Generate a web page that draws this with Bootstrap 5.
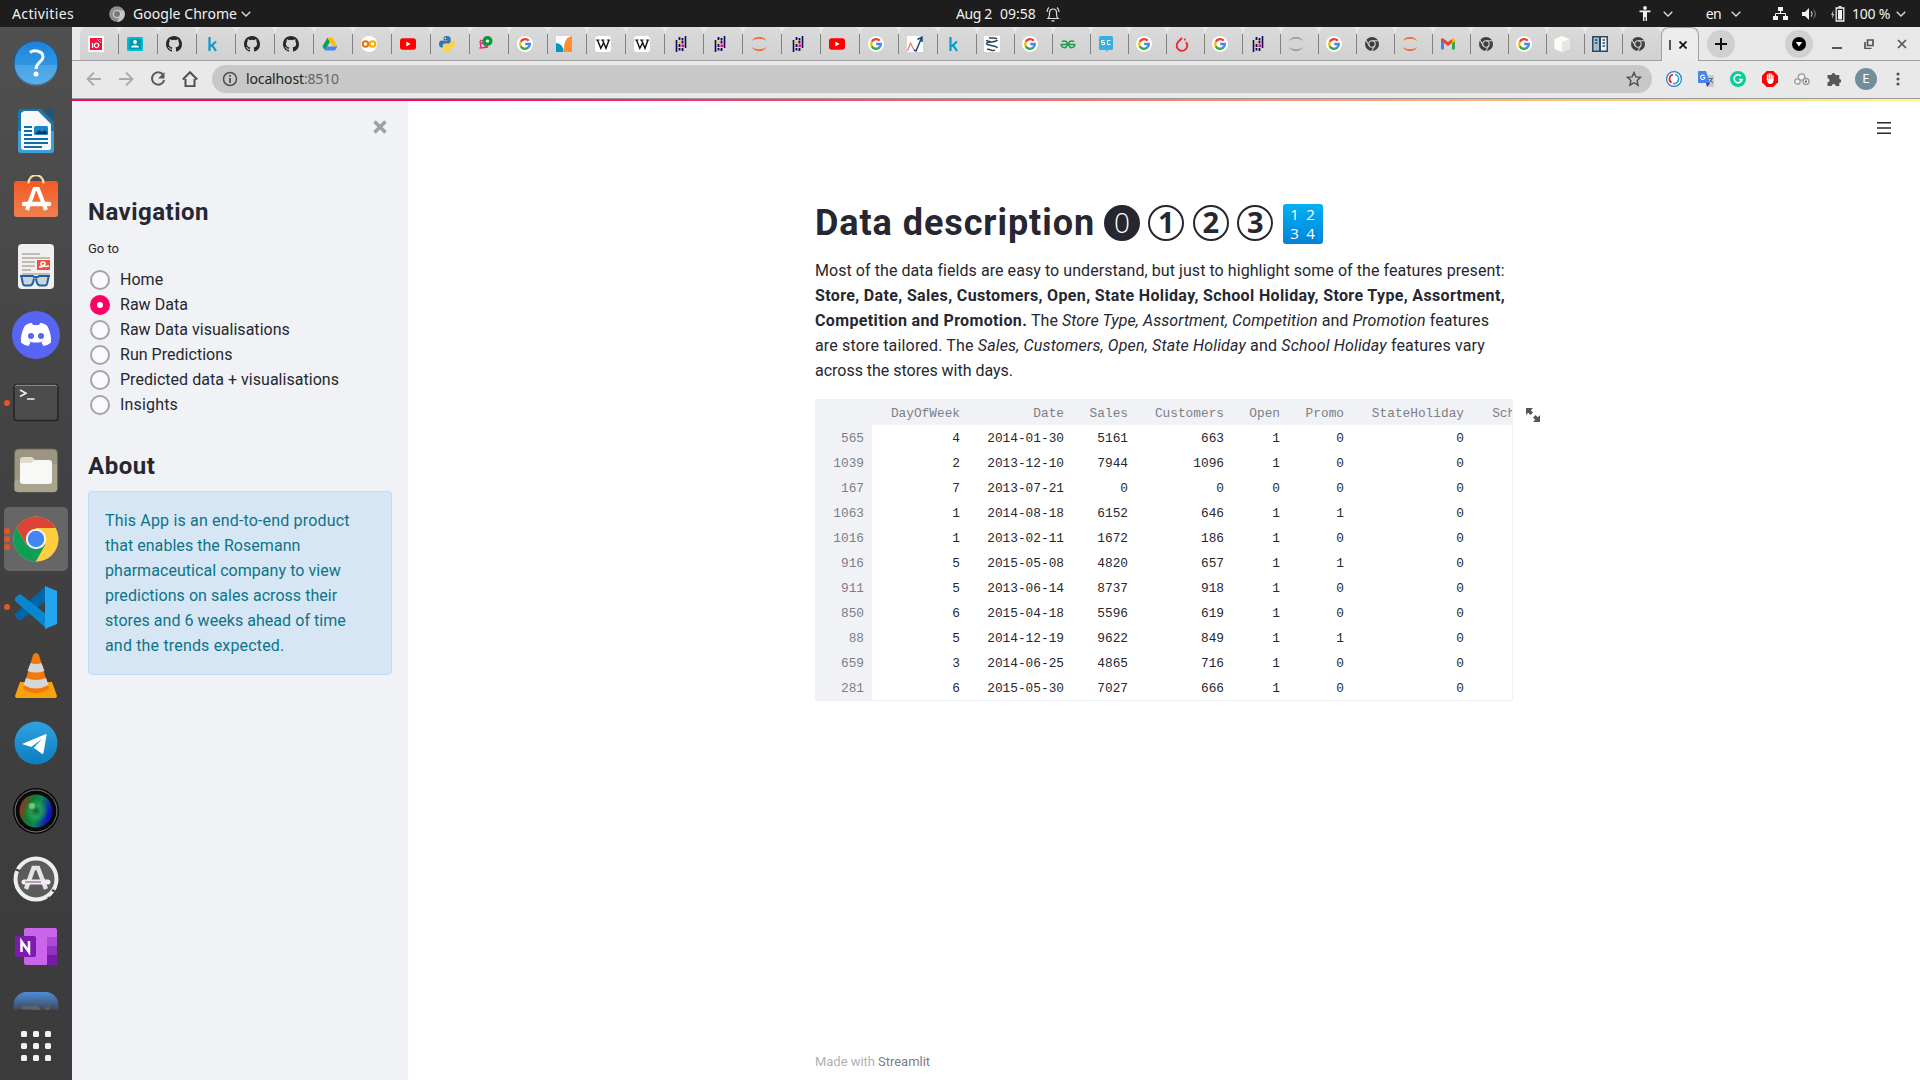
<!DOCTYPE html>
<html lang="en">
<head>
<meta charset="utf-8">
<title>Data description</title>
<link href="https://cdn.jsdelivr.net/npm/bootstrap@5.3.0/dist/css/bootstrap.min.css" rel="stylesheet">
<style>
html,body{height:1080px;overflow:hidden}
body{width:1920px;font-family:Roboto,"Noto Sans",sans-serif;font-size:16px;color:#262730;line-height:25px}
svg{display:block;flex:none}
.ubu{font-family:"Noto Sans","Open Sans",sans-serif}
.f{white-space:nowrap}
/* top bar */
.topbar{height:27px;background:#1d1d1d;color:#f2f2f2;font-size:14px;line-height:27px}
.tb-left{width:956px;padding-left:12px}
.app-name{margin-left:35px}
.t-act{letter-spacing:.367px}
.t-app{letter-spacing:.049px}
.t-day{letter-spacing:-.372px}
.t-lang{letter-spacing:-.7px;margin-left:33px}
.t-pct{letter-spacing:-.263px;margin-left:7px}
.bell{margin-left:10px}
.tray{padding-right:14px}
.tray .cv-a{margin-left:12px}
.tray .cv-b{margin-left:10px}
.tray .net{margin-left:32px}
.tray .vol{margin-left:14px}
.tray .bat{margin-left:13px}
.tray .cv-c{margin-left:6px}
/* dock */
.dock{width:72px;background:linear-gradient(#505050,#414141 45%,#3b3b3b);padding-top:2px}
.dk{height:68px;width:72px}
.dk.on{position:relative}
.dk.on::before{content:"";position:absolute;left:4px;right:4px;top:2px;bottom:2px;background:#666;border-radius:5px}
.dk.on svg{position:relative}
.pips{position:absolute;left:4px;top:0;height:100%}
.pips i{width:6px;height:6px;border-radius:50%;background:#e95420;margin:1px 0}
.dk-cut{height:29px;overflow:hidden}
.dk-apps{height:72px}
/* tab strip */
.strip{height:33px;background:#e8e8e8;padding-left:8px}
.strip-wrap{border-bottom:1px solid #9f9f9f}
.tb{width:39px;height:33px;background:linear-gradient(#dadada,#d1d1d1);border-radius:7px 7px 0 0;padding:1px 0 0 8px;position:relative}
.tb::after{content:"";position:absolute;right:0;top:7px;height:20px;width:1px;background:#808080}
.tb.n{width:38px;padding-left:7px}
.tb.z::after{display:none}
.tab-now{width:38px;height:34px;background:#ececec;border:1px solid #9f9f9f;border-bottom:0;border-radius:8px 8px 0 0;padding-left:7px;gap:8px;position:relative}
.tab-now i{width:2px;height:10px;background:#555}
.rnd{width:28px;height:28px;background:#d0d0d0}
.win{padding-left:8px}
.win .srch{margin-left:50px}
.win .mini{margin-left:19px}
.win .rest{margin-left:22px}
.win .clos{margin-left:23px}
/* toolbar */
.tools{height:38px;background:#e9e9e9;border-bottom:1px solid #9b9b9b;padding:3px 12px 4px 14px}
.omni{width:1440px;height:28px;border-radius:14px;background:#c8c8c8;padding:0 10px;margin-left:14px;font-size:14px}
.url{letter-spacing:-.14px;color:#222;padding-bottom:1px}
.url span{color:#666}
.exts{margin-left:14px}
.avatar{width:22px;height:22px;background:#6f909b;font-size:12px;line-height:22px;margin-left:13px}
.kebab{margin-left:19px}
.pinkline{height:2px;background:linear-gradient(90deg,#f06 336px,#fffd80)}
/* sidebar */
.side{width:336px;background:#f0f2f6;padding:0 16px}
.side-x{padding:19px 5px 0 0;height:96px}
.side h2{font-size:24px;font-weight:700;line-height:30px;margin:0;letter-spacing:.486px}
.side h2.about{margin-top:34px;letter-spacing:.553px}
.goto{font-size:13px;line-height:20px;margin:12px 0 8px}
.rad{width:20px;height:20px;border:2px solid #a3a4aa;background:#fafafc;border-radius:50%;margin-left:2px}
.rad.sel{border:7px solid #f06;background:#fff}
.opt{height:25px;gap:10px;letter-spacing:.03px}
.opt.last{letter-spacing:.172px}
.note{background:#d7e6f4;border:1px solid #bedcf4;border-radius:4px;padding:16px;color:#0c7489;height:184px;margin-top:10px;letter-spacing:.05px}
.note .wide{letter-spacing:.17px}
/* content */
.body-col{width:698px;margin-left:407px}
h1{font-size:36px;font-weight:700;line-height:44px;margin:0;height:44px}
h1.title{margin-top:100px;letter-spacing:.926px}
.dig{width:36px;height:36px;border:2.5px solid #262730;border-radius:50%;font:700 29px/30px "Open Sans","Noto Sans",sans-serif;letter-spacing:0;text-align:center;margin:-1px 8.4px 0 0}
.dig.inv{background:#262730;color:#fff;font-weight:300;font-size:28px;margin-left:9px}
.num{width:40px;height:40px;border-radius:3px;background:linear-gradient(#03b0f3,#0284d6);color:#fff;font:400 15px/19px "Open Sans",sans-serif;letter-spacing:0;text-align:center;padding:1px 4px 1px;margin:2px 0 0 1px}
.intro{margin-top:13px;letter-spacing:.063px}
.intro b{letter-spacing:.355px}
.intro .l3{letter-spacing:.08px}
.intro .l4{letter-spacing:.161px}
.intro .l5{letter-spacing:-.017px}
.frame{width:698px;height:302px;overflow:hidden;border:1px solid #eff0f4;margin-top:16px}
.dt{width:785px;table-layout:fixed;border-collapse:collapse;font:12.8px/23px "Liberation Mono",monospace;text-align:right;color:#262730;margin:-1px 0 0 -1px}
.dt td,.dt th{padding:2px 8px 0 0;height:25px;font-weight:400}
.dt thead th{height:26px;background:#f0f2f6;color:#7d7e86}
.dt tbody th{background:#f0f2f6;color:#7d7e86}
.grow-ico{margin:306px 0 0 12px}
.menu-ico{margin:20px 29px 0 0}
.made{font-size:13px;line-height:20px;color:#b0b1b6;margin-bottom:10px;letter-spacing:-.035px}
.made span{color:#7c7d84}
</style>
<script src="https://cdn.jsdelivr.net/npm/bootstrap@5.3.0/dist/js/bootstrap.bundle.min.js"></script>
</head>
<body class="d-flex flex-column bg-white">
<svg width="0" height="0" class="position-absolute">
<defs>
<linearGradient id="blu" x2="0" y2="1"><stop stop-color="#1a82da"/><stop offset="1" stop-color="#44a6e8"/></linearGradient>
<linearGradient id="org" x2="0" y2="1"><stop stop-color="#f25a24"/><stop offset="1" stop-color="#f08050"/></linearGradient>
<linearGradient id="tgm" x2="0" y2="1"><stop stop-color="#2fa3e0"/><stop offset="1" stop-color="#0d7dbd"/></linearGradient>
<linearGradient id="zm" x2="0" y2="1"><stop stop-color="#4f8cdb"/><stop offset=".42" stop-color="#3c4656"/></linearGradient>
<linearGradient id="lens" y2=".3"><stop stop-color="#d01818"/><stop offset=".4" stop-color="#107a30"/><stop offset=".65" stop-color="#0c8a50"/><stop offset="1" stop-color="#1010c0"/></linearGradient>
<radialGradient id="lens2"><stop stop-color="#0c6030"/><stop offset=".5" stop-color="#30b060" stop-opacity=".6"/><stop offset="1" stop-color="#30b060" stop-opacity="0"/></radialGradient>
</defs>
<symbol id="io" viewBox="0 0 16 16"><path fill="#fff" d="M0 0h16v16H0z"/><path fill="#f8103e" d="M2 2h12v12H2z"/><path d="M4.500 7v5M8.500 7.200a2.200 2.200 0 1 0 .1 0" stroke="#fff" stroke-width="1.300" fill="none"/><path d="M9 3l4 4M11.500 3 13 4.500" stroke="#fff" stroke-width=".6"/></symbol>
<symbol id="cls" viewBox="0 0 16 16"><rect y="1" width="16" height="14" rx="1.500" fill="#00bcd4"/><rect x="2" y="3" width="12" height="10" fill="#0097a7"/><circle cx="8" cy="6" r="1.900" fill="#fff"/><path d="M4 11.500c0-3 8-3 8 0z" fill="#fff"/></symbol>
<symbol id="gh" viewBox="0 0 16 16"><path fill="#24292f" d="M8 0C3.580 0 0 3.580 0 8c0 3.540 2.290 6.530 5.470 7.590.4.070.55-.17.55-.38 0-.19-.01-.82-.01-1.490-2.010.37-2.530-.49-2.690-.94-.09-.23-.48-.94-.82-1.130-.28-.15-.68-.52-.01-.53.63-.01 1.080.58 1.230.82.72 1.210 1.870.87 2.330.66.07-.52.28-.87.51-1.070-1.780-.2-3.640-.89-3.640-3.950 0-.87.31-1.590.82-2.150-.08-.2-.36-1.020.08-2.120 0 0 .67-.21 2.200.82a7.600 7.600 0 0 1 4 0c1.530-1.040 2.200-.82 2.200-.82.44 1.100.16 1.920.08 2.120.51.56.82 1.270.82 2.150 0 3.070-1.870 3.750-3.650 3.950.29.25.54.73.54 1.480 0 1.070-.01 1.930-.01 2.200 0 .21.15.46.55.38A8.010 8.010 0 0 0 16 8c0-4.420-3.580-8-8-8z"/></symbol>
<symbol id="kg" viewBox="0 0 16 16"><path d="M4.500 1v14M11 5.500 5.500 10.500M7 9l4 6" stroke="#0c9bc9" stroke-width="2.200" fill="none"/></symbol>
<symbol id="drv" viewBox="0 0 16 16"><path fill="#0f9d58" d="M5.500 1.500 8 5.800 3 14.500.5 10.500z"/><path fill="#ffc107" d="M5.500 1.500h5l5 9h-5z"/><path fill="#4285f4" d="M5.500 10.500h10L13 14.500H3z"/></symbol>
<symbol id="clb" viewBox="0 0 16 16"><circle cx="8" cy="8" r="8" fill="#fff"/><circle cx="4.500" cy="8" r="2.800" fill="none" stroke="#e8710a" stroke-width="2"/><circle cx="11.500" cy="8" r="2.800" fill="none" stroke="#f9ab00" stroke-width="2"/></symbol>
<symbol id="yt" viewBox="0 0 16 16"><rect y="2.200" width="16" height="11.600" rx="2.800" fill="#f00"/><path d="m6.300 5.500 4.300 2.500-4.300 2.500z" fill="#fff"/></symbol>
<symbol id="py" viewBox="0 0 16 16"><path fill="#3776ab" d="M8 0C5 0 4.600 1.200 4.600 2.300V4H8.300v.6H2.600C1 4.600 0 6 0 8s1 3.500 2.300 3.500h1.500V9.700c0-1.400 1-2.300 2.200-2.300h3.800c1 0 1.800-.8 1.800-1.900V2.300C11.600 1 10.400 0 8 0z"/><path fill="#ffd43b" d="M8.200 16c3 0 3.400-1.200 3.400-2.300V12H7.900v-.6h5.700C15 11.400 16 10 16 8s-1-3.500-2.300-3.500h-1.300v1.800c0 1.400-1 2.300-2.200 2.300H6.400c-1 0-1.800.8-1.800 1.900v3.200C4.600 15 5.800 16 8.200 16z"/><circle cx="6.300" cy="2.200" r=".8" fill="#fff"/></symbol>
<symbol id="grp" viewBox="0 0 16 16"><path d="M2 4.500c3-1 4 2 6 5M2 5l1 7 7-1M3 7c4 0 2 3 7 4M1.500 12h4" stroke="#e8267c" stroke-width="1.300" fill="none"/><circle cx="9.500" cy="5" r="5" fill="#0a9a3a"/><circle cx="9.500" cy="5" r="1.600" fill="#fff"/></symbol>
<symbol id="gg" viewBox="0 0 16 16"><circle cx="8" cy="8" r="8" fill="#fff"/><g fill="none" stroke-width="2.400"><path stroke="#ea4335" d="M11.700 4.700A4.800 4.800 0 0 0 3.800 5.800"/><path stroke="#fbbc05" d="M3.800 5.700a4.800 4.800 0 0 0 0 4.600"/><path stroke="#34a853" d="M3.700 10.200a4.800 4.800 0 0 0 7.700 1.200"/><path stroke="#4285f4" d="M8.200 8h4.600a4.800 4.800 0 0 1-1.500 3.500"/></g></symbol>
<symbol id="mb" viewBox="0 0 16 16"><path fill="#fff" d="M0 0h16v16H0z"/><path fill="#0098cc" d="M0 7a8 8 0 0 1 7.500 9H0z"/><path fill="#ff8f33" d="M16 0v16H8C7.500 8 9 1 16 0z"/></symbol>
<symbol id="wk" viewBox="0 0 16 16"><rect width="16" height="16" rx="3" fill="#fff"/><path d="M.8 4h3.700M6 4h3.700M11.800 4h3.400" stroke="#111" stroke-width=".9"/><path d="m2.500 4 3.300 8.300L9 6M7.500 4l3.500 8.300L14 4" fill="none" stroke="#111" stroke-width="1.400"/></symbol>
<symbol id="pd" viewBox="0 0 16 16"><path d="M3.500 4v12M12.500 0v12" stroke="#150458" stroke-width="1.600"/><path d="M6.500 1v3M6.500 12v2.500M9.500 2v2.500M9.500 12v3M6.500 8v3M9.500 5v2.500" stroke="#150458" stroke-width="1.800"/><path d="M5.500 5H8v2.500H5.500z" fill="#ffca00"/><path d="M8.500 8.500H11V11H8.500z" fill="#e70488"/></symbol>
<symbol id="jp" viewBox="0 0 16 16"><path d="M.8 5C3-.5 13-.5 15.200 5 12 2 4 2 .8 5zM.8 11c2.200 5.500 12.200 5.500 14.400 0-3.200 3-11.200 3-14.400 0z" fill="#f7682c"/></symbol>
<symbol id="jg" viewBox="0 0 16 16"><path d="M.8 5C3-.5 13-.5 15.200 5 12 2 4 2 .8 5zM.8 11c2.200 5.500 12.200 5.500 14.400 0-3.200 3-11.200 3-14.400 0z" fill="#9e9e9e"/></symbol>
<symbol id="ch" viewBox="0 0 16 16"><path fill="#fff" d="M0 0h16v16H0z"/><path d="m.5 15 3-8L7 14" fill="none" stroke="#ee7a6a" stroke-width="1.300"/><path d="m7 14 2 1 5.500-13M10.500 3.500 15 1v5" fill="none" stroke="#124a78" stroke-width="1.500"/></symbol>
<symbol id="sp" viewBox="0 0 16 16"><path fill="#fff" d="M0 0h16v16H0z"/><path d="M5 1.500c3 1.500 6-.5 8 1.500M13.500 4C11 7 3 5 2.500 7.500S12 9 13.500 12M2.500 4c.5 1.500 3 1.500 4 1.500M3 13.500c3-1 5 2.500 8 .5" fill="none" stroke="#26496a" stroke-width="1.500"/></symbol>
<symbol id="gf" viewBox="0 0 16 16"><path d="M2 5.500c3-1.500 6 0 5 4-1 3.500-5.500 2.500-5.800-1h13.600c-.3 3.500-4.800 4.500-5.800 1-1-4 2-5.500 5-4" fill="none" stroke="#159c50" stroke-width="1.500"/></symbol>
<symbol id="so" viewBox="0 0 16 16"><path fill="#35b0e2" d="M2.500 0h11A1.500 1.500 0 0 1 15 1.500v11a1.500 1.500 0 0 1-1.500 1.500H10l-2 2v-2H2.500A1.500 1.500 0 0 1 1 12.500v-11A1.500 1.500 0 0 1 2.500 0z"/><path d="M6.500 4.500h-3V6.500h3v2h-3M12.500 4.500h-3v4h3" stroke="#fff" fill="none"/></symbol>
<symbol id="pt" viewBox="0 0 16 16"><path d="M8 2 4.200 5.800a5.300 5.300 0 1 0 7.700.2" fill="none" stroke="#ee2233" stroke-width="1.800"/><circle cx="10.800" cy="3.600" r="1" fill="#ee2233"/></symbol>
<symbol id="cr" viewBox="0 0 16 16"><circle cx="8" cy="8" r="7" fill="#3c4043"/><circle cx="8" cy="8" r="3.200" fill="#3c4043" stroke="#d4d4d4" stroke-width="1.100"/><path d="M8 4.700h6.200M5.200 9.700 2.100 4.300M10.800 9.700 7.700 15" stroke="#d4d4d4" stroke-width="1.100"/></symbol>
<symbol id="gm" viewBox="0 0 16 16"><path fill="#4285f4" d="M1 4h3v9.500H2a1 1 0 0 1-1-1z"/><path fill="#34a853" d="M12 4h3v8.500a1 1 0 0 1-1 1h-2z"/><path fill="#ea4335" d="M1 3.500c0-1.500 1.500-1.500 2.500-.8L8 6l4.500-3.300V6.500L8 10 3.500 6.500 1 5z"/><path fill="#fbbc04" d="M12 3c1.500-1.200 3-.5 3 1v1.300l-3 2z"/></symbol>
<symbol id="cb" viewBox="0 0 16 16"><path fill="#fbfbf9" d="m8 0 7.500 3v10L8 16 .5 13V3z"/><path fill="#e9e6e0" d="m8 6 7.500-3v10L8 16z"/></symbol>
<symbol id="dc" viewBox="0 0 16 16"><path fill="#33475b" d="M0 0h16v16H0z"/><path fill="#9fc0d0" d="M1.500 1.500H7v13H1.500z"/><path fill="#e8f4f8" d="M9 1.500h5.500v13H9z"/><path d="M3 4h2.500M3 7h2.500M10.500 4H13M10.500 7H13M10.500 10H13" stroke="#33475b" stroke-width="1.500"/></symbol>
<symbol id="cv" viewBox="0 0 10 6"><path d="m.7.7 4.300 4.300L9.300.7" fill="none" stroke="#ddd" stroke-width="1.300"/></symbol>
</svg>

<header class="topbar ubu d-flex align-items-center flex-shrink-0">
  <div class="tb-left d-flex align-items-center">
    <span class="f t-act">Activities</span>
    <svg class="app-name" width="16" height="16" viewBox="0 0 16 16"><circle cx="8" cy="8" r="7.800" fill="#8f8f8f"/><path d="M8 4.500h7A8 8 0 0 1 8 16l3-6z" fill="#c4c4c4"/><circle cx="8" cy="8" r="3.600" fill="#777" stroke="#ddd"/></svg>
    <span class="f t-app ms-2">Google Chrome</span>
    <svg class="ms-1" width="10" height="6"><use href="#cv"/></svg>
  </div>
  <span class="f t-day">Aug 2</span><span class="f ms-2">09:58</span>
  <svg class="bell" width="14" height="16" viewBox="0 0 14 16"><path d="M2 12.500c1.500-1 1.500-3 1.500-6a3.500 3.500 0 0 1 7 0c0 3 0 5 1.500 6zM5.500 14.800h3M1 6c0-2 .8-3.500 2-4.500M13 6c0-2-.8-3.500-2-4.500" fill="none" stroke="#ddd" stroke-width="1.200"/></svg>
  <div class="tray ms-auto d-flex align-items-center">
    <svg width="12" height="15" viewBox="0 0 12 15"><circle cx="6" cy="2" r="1.900" fill="#f2f2f2"/><path d="M.5 4.500h11v1.700H8V15H6.600v-4H5.400v4H4V6.200H.5z" fill="#f2f2f2"/></svg>
    <svg class="cv-a" width="10" height="6"><use href="#cv"/></svg>
    <span class="f t-lang">en</span>
    <svg class="cv-b" width="10" height="6"><use href="#cv"/></svg>
    <svg class="net" width="15" height="14" viewBox="0 0 15 14"><path d="M5 0h5v4H5zM0 9h5v4H0zM10 9h5v4h-5z" fill="#f2f2f2"/><path d="M7.500 4v2.500M2.500 9V6.500h10V9" stroke="#f2f2f2" fill="none"/></svg>
    <svg class="vol" width="15" height="12" viewBox="0 0 15 12"><path d="M0 4h3l4-4v12L3 8H0z" fill="#f2f2f2"/><path d="M9 3.500c1.300 1.300 1.300 3.700 0 5" fill="none" stroke="#ccc" stroke-width="1.200"/><path d="M11.500 1.500c2.300 2.500 2.300 6.500 0 9" fill="none" stroke="#888"/></svg>
    <svg class="bat" width="15" height="16" viewBox="0 0 15 16"><path d="M3.500 4 1 9h1.500L2 13l2.500-5H3z" fill="#bbb"/><path d="M8.500 0h3v1.500h-3z" fill="#f2f2f2"/><path d="M6.200 2h7.600v13H6.200z" fill="none" stroke="#f2f2f2" stroke-width="1.300"/><path d="M8 4h4v9.500H8z" fill="#f2f2f2"/></svg>
    <span class="f t-pct">100 %</span>
    <svg class="cv-c" width="10" height="6"><use href="#cv"/></svg>
  </div>
</header>

<div class="d-flex flex-grow-1">
<nav class="dock d-flex flex-column align-items-center flex-shrink-0">
  <div class="dk d-flex align-items-center justify-content-center"><svg width="48" height="48"><circle cx="24" cy="24" r="22" fill="url(#blu)" stroke="#165d9a"/><path d="M2.500 26a21.500 21.500 0 0 0 43 0z" fill="#fff" opacity=".12"/><path d="M18 13.500c4-3 13-2 13 4.500 0 5-7 5-7 12" fill="none" stroke="#fff" stroke-width="3"/><circle cx="24" cy="35" r="2.500" fill="#fff"/></svg></div>
  <div class="dk d-flex align-items-center justify-content-center"><svg width="48" height="48"><path d="M9 2h20l13 13v28a3 3 0 0 1-3 3H9a3 3 0 0 1-3-3V5a3 3 0 0 1 3-3z" fill="#1a75ab"/><path d="M6 24h36v19a3 3 0 0 1-3 3H9a3 3 0 0 1-3-3z" fill="#3da0d8"/><path d="M12 4h14l13 13v24a2 2 0 0 1-2 2H12a3 3 0 0 1-3-3V6z" fill="#f8f8f8"/><path d="M32 2h10v11z" fill="#11598a"/><path d="M12 20h8M12 24h8M12 28h8M12 32h24M12 36h24M12 40h18" stroke="#0d6eb0" stroke-width="2"/><rect x="22" y="19" width="14" height="9" rx="1.500" fill="#1a85c8"/><path d="m23 27 4-4 3 2 3-2 3 4z" fill="#0c3b5e"/></svg></div>
  <div class="dk d-flex align-items-center justify-content-center"><svg width="48" height="48"><rect x="2" y="6" width="44" height="36" rx="3" fill="url(#org)"/><path d="M16.500 8.500c0-11 15-11 15 0" fill="none" stroke="#f7dcae" stroke-width="2.200"/><path d="m15 35 7.500-21h3.500L34 35" fill="none" stroke="#fff" stroke-width="4"/><path d="M12 29h25" stroke="#fff" stroke-width="4.500" stroke-linecap="round"/></svg></div>
  <div class="dk d-flex align-items-center justify-content-center"><svg width="48" height="48"><rect x="6" y="1" width="36" height="45" rx="4" fill="#f0f0f0"/><path d="M10 11h18M10 15h28M10 19h13M10 23h13M10 27h9M10 31h28" stroke="#c0bcae" stroke-width="2"/><path d="M25 17h13v10H25z" fill="#f2503e"/><path d="M27 24c6 0 8-5 4-5s-3 6 6 4" fill="none" stroke="#fff" stroke-width="1.500"/><path d="M9 34h12l3 1 3-1h9l-2 8h-7l-2-5h-2l-2 5h-9z" fill="#cfd4d8"/><path d="M8 33h12.500l2 1h3l2-1H38M9.500 34l1.500 7q.5 1.500 2 1.500h5q3 0 4-7M36.500 34 35 41q-.5 1.500-2 1.500h-5q-3 0-4-7" fill="none" stroke="#1f5fa8" stroke-width="2"/></svg></div>
  <div class="dk d-flex align-items-center justify-content-center"><svg width="48" height="48"><circle cx="24" cy="24" r="24" fill="#5865f2"/><path d="M13 14.500c3-2 5-2.500 7-2.500l1 2h6l1-2c2 0 4 .5 7 2.500 3 5 4.500 11 4 17-3 2.300-5 3-7.500 3.500l-2-3.500 2.500-1.500c-5 2-11 2-16 0l2.500 1.500-2 3.500c-2.500-.5-4.500-1.200-7.500-3.500-.5-6 1-12 4-17z" fill="#fff"/><circle cx="19" cy="25" r="3" fill="#5865f2"/><circle cx="29" cy="25" r="3" fill="#5865f2"/></svg></div>
  <div class="dk d-flex align-items-center justify-content-center position-relative"><span class="pips d-flex flex-column justify-content-center"><i></i></span><svg width="48" height="48"><rect x="2" y="5.500" width="44" height="36" rx="3" fill="#4c4c4c" stroke="#242424" stroke-width="1.500"/><path d="M3 7.500a2 2 0 0 1 2-1.200h38a2 2 0 0 1 2 1.200" stroke="#999" fill="none"/><path d="m8 11 6 3.200L8 17.500M15 20h7.500" fill="none" stroke="#eee" stroke-width="1.600"/></svg></div>
  <div class="dk d-flex align-items-center justify-content-center"><svg width="48" height="48"><rect x="2.500" y="2" width="43" height="43" rx="4" fill="#9c9680" stroke="#6b6657"/><path d="M2.500 34 45 16v26a3 3 0 0 1-3 3H5.500a3 3 0 0 1-3-3z" fill="#a9a490"/><rect x="8" y="13" width="32" height="24" rx="3" fill="#f8f8f6"/><path d="M8 16v-3a3 3 0 0 1 3-3h9l3 3-4 3z" fill="#dedccc"/></svg></div>
  <div class="dk on d-flex align-items-center justify-content-center"><span class="pips d-flex flex-column justify-content-center"><i></i><i></i><i></i></span><svg width="48" height="48"><circle cx="24" cy="24" r="22.500" fill="#ffcd40"/><path d="M4.500 12.700A22.500 22.500 0 0 1 43.500 13H24L14.500 29.500z" fill="#db4437"/><path d="M4.500 12.800A22.500 22.500 0 0 0 24 46.500L33.500 29.500H14.300z" fill="#0f9d58"/><path d="M24 13.500h19.700A22.500 22.500 0 0 1 24 46.500l9.500-17z" fill="#ffcd40"/><circle cx="24" cy="24" r="10.200" fill="#f5f5f5"/><circle cx="24" cy="24" r="8.200" fill="#4285f4"/></svg></div>
  <div class="dk d-flex align-items-center justify-content-center position-relative"><span class="pips d-flex flex-column justify-content-center"><i></i></span><svg width="48" height="48"><path d="m34 3-31 28v3l4 3h2l25-19z" fill="#0065a9"/><path d="M34 45 3 18v-3l4-3.500h2L34 31z" fill="#0a86d0"/><path d="m33 3 12 5v33l-12 5z" fill="#24a5f2"/></svg></div>
  <div class="dk d-flex align-items-center justify-content-center"><svg width="48" height="48"><path d="M8 31h32l5 14q0 2-2 2H5q-2 0-2-2z" fill="#f8a30c"/><path d="M11 38 21 4q3-4 6 0l10 34q-13 8-26 0z" fill="#f07a0c"/><path d="m18.500 12-3 8q8 3 17 0l-3-8q-5 2-11 0zM14 27l-2.500 7q12 7 25 0L34 27q-10 4-20 0z" fill="#d4d6d8"/></svg></div>
  <div class="dk d-flex align-items-center justify-content-center"><svg width="48" height="48"><circle cx="24" cy="24" r="21.500" fill="url(#tgm)"/><path d="m10 25 24-10c0 0 .8 0 .5 1.500L31.500 34c-.3 1.200-1 1-2 .5l-6-4.500-4-2z" fill="#fff"/><path d="m19 28 11-8-8 8.500-.5 4z" fill="#2a94cf"/></svg></div>
  <div class="dk d-flex align-items-center justify-content-center"><svg width="48" height="48"><circle cx="24" cy="24" r="23" fill="#0a0a0a"/><circle cx="24" cy="24" r="21" fill="none" stroke="#777"/><circle cx="24" cy="24" r="16.500" fill="url(#lens)"/><circle cx="24" cy="24" r="12" fill="url(#lens2)"/><circle cx="20" cy="19" r="3" fill="#a8e8a0" opacity=".6"/></svg></div>
  <div class="dk d-flex align-items-center justify-content-center"><svg width="48" height="48"><circle cx="24" cy="24" r="20.500" fill="#5c5c5c" stroke="#eee" stroke-width="4"/><path d="m2 14 6 2M40 35l6 3M36 42l3 4" stroke="#444" stroke-width="2"/><path d="m14 34 7.500-21h4.500L34 34" fill="none" stroke="#e4e4e4" stroke-width="4.500"/><path d="M12 27h24" stroke="#eee" stroke-width="5" stroke-linecap="round"/><path d="M13 27h16" stroke="#92408a" stroke-width="1"/></svg></div>
  <div class="dk d-flex align-items-center justify-content-center"><svg width="48" height="48"><rect x="12" y="5" width="33" height="37" rx="2" fill="#ca64ea"/><path d="M35 14h10v9H35z" fill="#ae4bd5"/><path d="M35 23h10v9H35z" fill="#9332bf"/><path d="M35 32h10v8a2 2 0 0 1-2 2h-8z" fill="#7719aa"/><rect x="3" y="13" width="21" height="21" rx="2" fill="#7a1cb0"/><path d="M9.500 29V18.500L17 29V18" fill="none" stroke="#fff" stroke-width="2.500"/></svg></div>
  <div class="dk-cut"><svg width="48" height="48" class="mt-1"><rect x="1.500" y="7" width="45" height="44" rx="13" fill="url(#zm)"/><path d="M10 24q0-3 4-3h10q4 0 4 4zM32 24l5-3v4z" fill="#626262"/></svg></div>
  <div class="dk-apps d-flex align-items-center"><svg width="32" height="32" fill="#f2f2f2"><g id="dots"><rect x="1" y="1" width="6" height="6" rx="1.500"/><rect x="13" y="1" width="6" height="6" rx="1.500"/><rect x="25" y="1" width="6" height="6" rx="1.500"/></g><use href="#dots" y="12"/><use href="#dots" y="24"/></svg></div>
</nav>

<div class="d-flex flex-column flex-grow-1">
  <div class="strip-wrap"><div class="strip d-flex">
    <div id="tabs" class="d-flex"></div>
    <div class="tab-now d-flex align-items-center"><i></i><svg width="8" height="8"><path d="m.5.5 7 7m0-7-7 7" stroke="#111" stroke-width="1.700"/></svg></div>
    <div class="win d-flex align-items-center flex-grow-1">
      <span class="rnd rounded-circle d-flex align-items-center justify-content-center"><svg width="12" height="12"><path d="M6 0v12M0 6h12" stroke="#111" stroke-width="2"/></svg></span>
      <span class="rnd srch rounded-circle d-flex align-items-center justify-content-center"><svg width="14" height="14"><circle cx="7" cy="7" r="7"/><path d="M3.800 5h6.400L7 9.500z" fill="#fff"/></svg></span>
      <svg class="mini" width="10" height="10"><path d="M0 9h10" stroke="#555" stroke-width="2"/></svg>
      <svg class="rest" width="10" height="10"><path d="M3.500 1H9v5.500H3.500zM1 3v6.500h6.500" fill="none" stroke="#555" stroke-width="1.700"/></svg>
      <svg class="clos" width="10" height="10"><path d="m1 1 8 8m0-8-8 8" stroke="#555" stroke-width="1.700"/></svg>
    </div>
  </div></div>

  <div class="tools d-flex align-items-center">
    <svg width="16" height="16"><path d="M15 8H2M8 1.500 1.500 8 8 14.500" fill="none" stroke="#aaa" stroke-width="1.800"/></svg>
    <svg class="ms-3" width="16" height="16"><path d="M1 8h13M8 1.500 14.500 8 8 14.500" fill="none" stroke="#aaa" stroke-width="1.800"/></svg>
    <svg class="ms-3" width="16" height="16"><path d="M13 3.500A6.200 6.200 0 1 0 14.200 9" fill="none" stroke="#555a5e" stroke-width="2"/><path d="M14.500 1v6.500H8z" fill="#555a5e"/></svg>
    <svg class="ms-3" width="16" height="16"><path d="M3.500 8v7.200h9V8M.8 8.500 8 1.200l7.200 7.300" fill="none" stroke="#4b5054" stroke-width="2"/></svg>
    <div class="omni ubu d-flex align-items-center">
      <svg width="16" height="16"><circle cx="8" cy="8" r="6.500" fill="none" stroke="#4b5054" stroke-width="1.500"/><path d="M8 7v5M8 4v1.800" stroke="#4b5054" stroke-width="1.800"/></svg>
      <span class="f url ms-2">localhost<span>:8510</span></span>
      <svg class="ms-auto" width="16" height="16"><path d="m8 1.500 1.900 4.400 4.800.4-3.600 3.200 1 4.700L8 11.700l-4.100 2.500 1-4.700L1.300 6.300l4.800-.4z" fill="none" stroke="#4b5054" stroke-width="1.400"/></svg>
    </div>
    <div class="exts d-flex align-items-center gap-3">
      <svg width="16" height="16"><circle cx="8" cy="8" r="7.400" fill="#fff" stroke="#2a7fb5" stroke-width="1.200"/><path d="M7 3.500a4.600 4.600 0 0 0-1.500 8.300" fill="none" stroke="#e02040" stroke-width="1.700"/><path d="M9 3.500a4.600 4.600 0 0 1-2 9" fill="none" stroke="#22a5cc" stroke-width="1.700"/></svg>
      <svg width="16" height="16"><path d="M6 4h10v12H9z" fill="#c8cacd"/><path d="M1 0h7l4 12H1a1 1 0 0 1-1-1V1a1 1 0 0 1 1-1z" fill="#4a83ee"/><path d="M8 12h4l-3 4z" fill="#4133b0"/><path d="M6.500 4.800A2.200 2.200 0 1 0 7 6.500H5" fill="none" stroke="#fff" stroke-width="1.100"/><path d="M10.500 7.500h4.500M13.500 8c0 2-1 3-2.500 4M12 9l3 3" stroke="#4a7390" fill="none"/></svg>
      <svg width="16" height="16"><circle cx="8" cy="8" r="8" fill="#0bce97"/><path d="M11 5a4 4 0 1 0 1 3.500H9" fill="none" stroke="#fff" stroke-width="1.600"/></svg>
      <svg width="16" height="16"><path d="M4.700 0h6.600L16 4.700v6.600L11.300 16H4.700L0 11.300V4.700z" fill="#f00"/><path d="M5.500 4v5M7.300 3v5M9.100 3v5M10.900 4.500V9" stroke="#fff" stroke-width="1.400" stroke-linecap="round"/><path d="M4.800 8h6.800c0 3-1 5-3.300 5S5 11 4.800 8z" fill="#fff"/></svg>
      <svg width="16" height="16"><g fill="#f2f2f2" stroke="#999" stroke-width="1.300"><circle cx="7.500" cy="6" r="3.200"/><circle cx="3.500" cy="10.500" r="2.700"/><circle cx="12" cy="10.500" r="3"/></g><circle cx="12" cy="10.500" r="1.100" fill="#555"/></svg>
      <svg width="16" height="16"><path d="M1.500 4h4a1.900 1.900 0 1 1 3.800 0h4v4a1.900 1.900 0 1 1 0 3.800V15H9.700a2 2 0 0 0-4 0H1.500v-3.700a2 2 0 0 0 0-4z" fill="#54585c"/></svg>
    </div>
    <span class="avatar rounded-circle text-white text-center">E</span>
    <svg class="kebab" width="4" height="14" fill="#54585c"><circle cx="2" cy="2" r="1.600"/><circle cx="2" cy="7" r="1.600"/><circle cx="2" cy="12" r="1.600"/></svg>
  </div>
  <div class="pinkline"></div>

  <div class="d-flex flex-grow-1">
    <aside class="side">
      <div class="side-x d-flex justify-content-end"><svg width="14" height="14"><path d="m1.500 1.500 11 11m0-11-11 11" stroke="#a0a1a5" stroke-width="3.600"/></svg></div>
      <h2>Navigation</h2>
      <div class="goto">Go to</div>
      <div class="opt d-flex align-items-center"><span class="rad"></span>Home</div>
      <div class="opt d-flex align-items-center"><span class="rad sel"></span>Raw Data</div>
      <div class="opt d-flex align-items-center"><span class="rad"></span>Raw Data visualisations</div>
      <div class="opt d-flex align-items-center"><span class="rad"></span>Run Predictions</div>
      <div class="opt d-flex align-items-center"><span class="rad"></span>Predicted data + visualisations</div>
      <div class="opt last d-flex align-items-center"><span class="rad"></span>Insights</div>
      <h2 class="about">About</h2>
      <div class="note">
        <span class="f wide">This App is an end-to-end product</span><br>
        <span class="f">that enables the Rosemann</span><br>
        <span class="f">pharmaceutical company to view</span><br>
        <span class="f">predictions on sales across their</span><br>
        <span class="f">stores and 6 weeks ahead of time</span><br>
        <span class="f wide">and the trends expected.</span>
      </div>
    </aside>
    <main class="flex-grow-1 d-flex">
      <div class="body-col d-flex flex-column">
        <h1 class="title d-flex align-items-center"><span class="f">Data description</span>
          <span class="dig inv">0</span><span class="dig">1</span><span class="dig">2</span><span class="dig">3</span>
          <span class="num d-flex flex-wrap justify-content-around"><span class="w-50">1</span><span class="w-50">2</span><span class="w-50">3</span><span class="w-50">4</span></span>
        </h1>
        <div class="intro">
          <span class="f">Most of the data fields are easy to understand, but just to highlight some of the features present:</span><br>
          <b class="f">Store, Date, Sales, Customers, Open, State Holiday, School Holiday, Store Type, Assortment,</b><br>
          <span class="f l3"><b>Competition and Promotion.</b> The <i>Store Type, Assortment, Competition</i> and <i>Promotion</i> features</span><br>
          <span class="f l4">are store tailored. The <i>Sales, Customers, Open, State Holiday</i> and <i>School Holiday</i> features vary</span><br>
          <span class="f l5">across the stores with days.</span>
        </div>
        <div class="frame">
          <table class="dt">
            <colgroup><col width="57"><col width="96"><col width="104"><col width="64"><col width="96"><col width="56"><col width="64"><col width="120"><col width="128"></colgroup>
            <thead><tr><th></th><th>DayOfWeek</th><th>Date</th><th>Sales</th><th>Customers</th><th>Open</th><th>Promo</th><th>StateHoliday</th><th>SchoolHoliday</th></tr></thead>
            <tbody>
            <tr><th>565</th><td>4</td><td>2014-01-30</td><td>5161</td><td>663</td><td>1</td><td>0</td><td>0</td><td></td></tr>
            <tr><th>1039</th><td>2</td><td>2013-12-10</td><td>7944</td><td>1096</td><td>1</td><td>0</td><td>0</td><td></td></tr>
            <tr><th>167</th><td>7</td><td>2013-07-21</td><td>0</td><td>0</td><td>0</td><td>0</td><td>0</td><td></td></tr>
            <tr><th>1063</th><td>1</td><td>2014-08-18</td><td>6152</td><td>646</td><td>1</td><td>1</td><td>0</td><td></td></tr>
            <tr><th>1016</th><td>1</td><td>2013-02-11</td><td>1672</td><td>186</td><td>1</td><td>0</td><td>0</td><td></td></tr>
            <tr><th>916</th><td>5</td><td>2015-05-08</td><td>4820</td><td>657</td><td>1</td><td>1</td><td>0</td><td></td></tr>
            <tr><th>911</th><td>5</td><td>2013-06-14</td><td>8737</td><td>918</td><td>1</td><td>0</td><td>0</td><td></td></tr>
            <tr><th>850</th><td>6</td><td>2015-04-18</td><td>5596</td><td>619</td><td>1</td><td>0</td><td>0</td><td></td></tr>
            <tr><th>88</th><td>5</td><td>2014-12-19</td><td>9622</td><td>849</td><td>1</td><td>1</td><td>0</td><td></td></tr>
            <tr><th>659</th><td>3</td><td>2014-06-25</td><td>4865</td><td>716</td><td>1</td><td>0</td><td>0</td><td></td></tr>
            <tr><th>281</th><td>6</td><td>2015-05-30</td><td>7027</td><td>666</td><td>1</td><td>0</td><td>0</td><td></td></tr>
            </tbody>
          </table>
        </div>
        <div class="made mt-auto">Made with <span>Streamlit</span></div>
      </div>
      <svg class="grow-ico" width="16" height="16"><path d="M1 1h7L5.800 3.200 8 5.500 5.500 8 3.200 5.800 1 8zM15 15H8l2.200-2.200L8 10.500 10.500 8l2.300 2.200L15 8z" fill="#55565e"/></svg>
      <svg class="menu-ico ms-auto" width="14" height="14"><path d="M0 1.700h14M0 7h14M0 12.300h14" stroke="#262730" stroke-width="1.600"/></svg>
    </main>
  </div>
</div>
</div>
<script>
// Background tabs, left to right; the first 23 are one pixel wider than the rest
const icons = 'io cls gh kg gh gh drv clb yt py grp gg mb wk wk pd pd jp pd yt gg ch kg sp gg gf so gg pt gg pd jg gg cr jp gm cr gg cb dc cr'.split(' ');
document.getElementById('tabs').innerHTML = icons.map((id, i) =>
  `<div class="tb ${i > 22 ? 'n' : ''} ${i === icons.length - 1 ? 'z' : ''} d-flex align-items-center"><svg width="16" height="16"><use href="#${id}"/></svg></div>`).join('');
</script>
</body>
</html>
